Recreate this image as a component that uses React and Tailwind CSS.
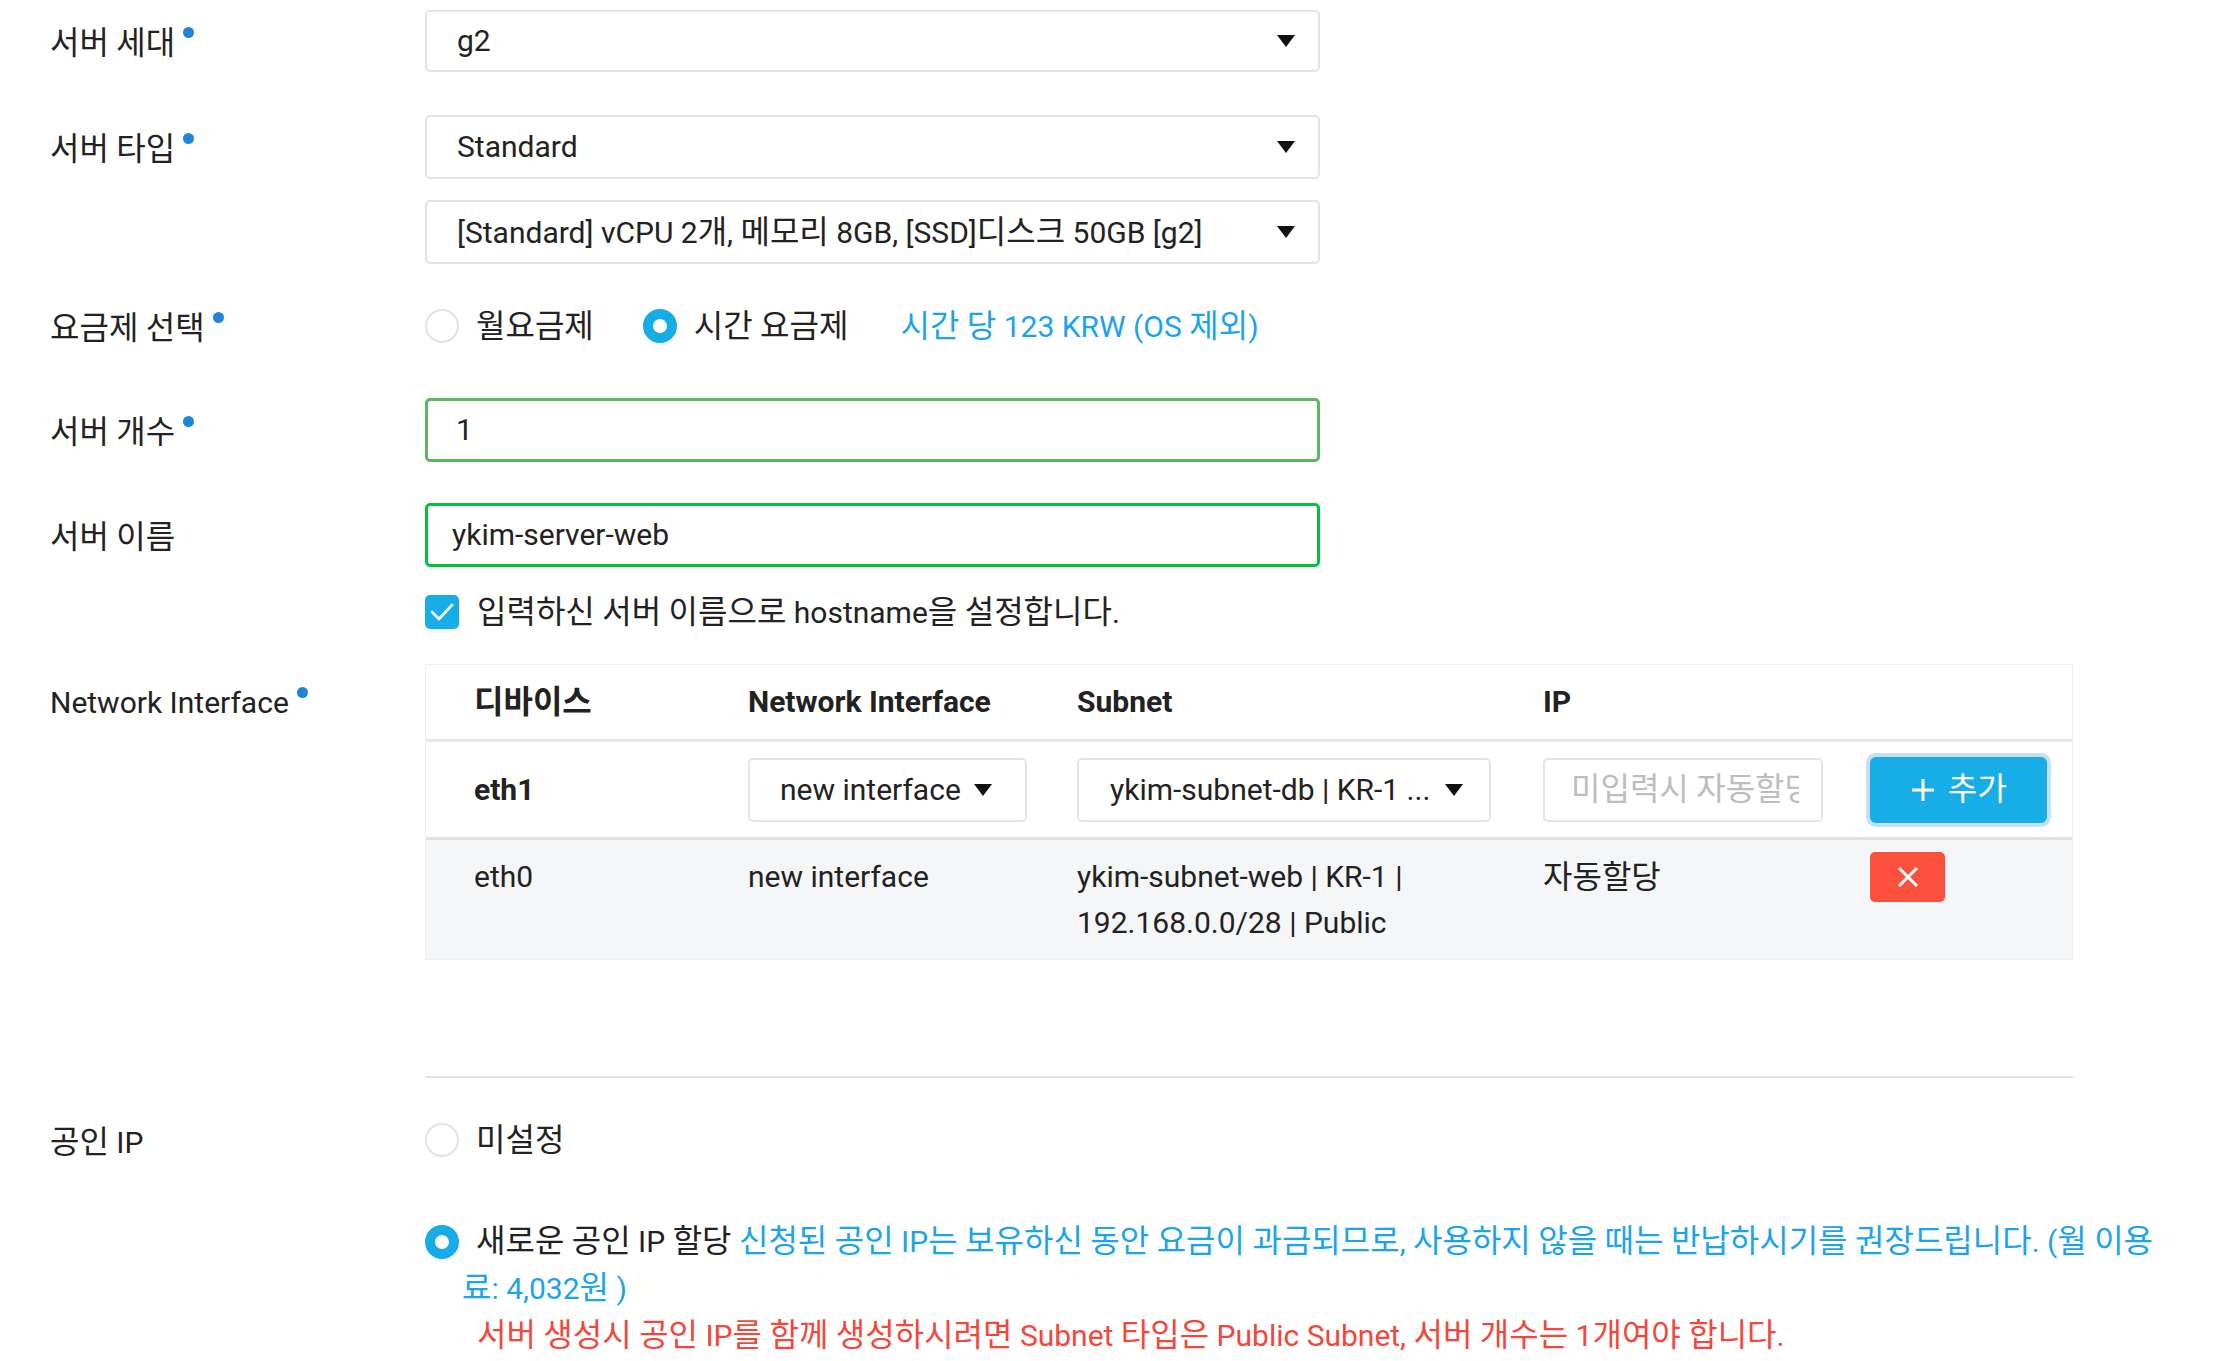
import React from "react";

const FONT = { fontFamily: 'Roboto, "Noto Sans CJK KR", "Noto Sans", sans-serif' };

function K({ children }) {
  const s = String(children);
  const parts = s.split(/([\uAC00-\uD7A3\u3131-\u318E]+)/);
  return parts.map((p, i) =>
    /[\uAC00-\uD7A3\u3131-\u318E]/.test(p) ? (
      <span key={i} className="text-[32px]">{p}</span>
    ) : (
      <React.Fragment key={i}>{p}</React.Fragment>
    )
  );
}

function Req({ children }) {
  return (
    <span className="relative inline-block">
      <K>{children}</K>
      <span className="absolute -right-[19px] top-[6px] w-[11px] h-[11px] rounded-full bg-[#1f84dc]" />
    </span>
  );
}

function Caret({ className = "" }) {
  return (
    <svg width="20" height="14" viewBox="0 0 20 14" className={className}>
      <path d="M1 1 L19 1 L10 13 Z" fill="#111" />
    </svg>
  );
}

function Select({ children, h = "h-[64px]" }) {
  return (
    <div className={"w-[895px] border-2 border-[#e4e4e4] rounded-[5px] flex items-center pl-[30px] pr-[22px] justify-between bg-white " + h}>
      <span className="text-[#222] whitespace-nowrap"><K>{children}</K></span>
      <Caret />
    </div>
  );
}

function Radio({ checked }) {
  return checked ? (
    <span className="inline-block align-middle w-[34px] h-[34px] rounded-full border-[10px] border-[#16ace8] bg-white shrink-0" />
  ) : (
    <span className="inline-block align-middle w-[34px] h-[34px] rounded-full border-2 border-[#e2e2e2] bg-white shrink-0" />
  );
}

export default function App() {
  return (
    <div style={FONT} className="bg-white w-[2213px] h-[1361px] overflow-hidden text-[#222] text-[30px] leading-[44px] pl-[50px]">
      {/* 서버 세대 */}
      <div className="flex items-center mt-[10px] h-[62px]">
        <div className="w-[375px] pt-[4px]"><Req>서버 세대</Req></div>
        <Select h="h-[62px]">g2</Select>
      </div>
      {/* 서버 타입 */}
      <div className="flex items-center mt-[43px] h-[64px]">
        <div className="w-[375px] pt-[4px]"><Req>서버 타입</Req></div>
        <Select>Standard</Select>
      </div>
      <div className="flex items-center mt-[21px] h-[64px]">
        <div className="w-[375px]" />
        <Select>[Standard] vCPU 2개, 메모리 8GB, [SSD]디스크 50GB [g2]</Select>
      </div>
      {/* 요금제 선택 */}
      <div className="flex items-center mt-[31px] h-[62px]">
        <div className="w-[375px] pt-[4px]"><Req>요금제 선택</Req></div>
        <div className="flex items-center">
          <Radio />
          <span className="ml-[17px]"><K>월요금제</K></span>
          <span className="ml-[49px] flex"><Radio checked /></span>
          <span className="ml-[17px]"><K>시간 요금제</K></span>
          <span className="ml-[52px] text-[#1ca4e8]"><K>시간 당 123 KRW (OS 제외)</K></span>
        </div>
      </div>
      {/* 서버 개수 */}
      <div className="flex items-center mt-[41px] h-[64px]">
        <div className="w-[375px] pt-[4px]"><Req>서버 개수</Req></div>
        <div className="w-[895px] h-[64px] border-[3px] border-[#5cb85c] rounded-[5px] flex items-center pl-[28px]">1</div>
      </div>
      {/* 서버 이름 */}
      <div className="flex items-center mt-[41px] h-[64px]">
        <div className="w-[375px] pt-[4px]"><K>서버 이름</K></div>
        <div className="w-[895px] h-[64px] border-[3px] border-[#00c43c] rounded-[5px] flex items-center pl-[24px]">ykim-server-web</div>
      </div>
      {/* hostname checkbox */}
      <div className="flex items-center mt-[28px] h-[34px]">
        <div className="w-[375px]" />
        <span className="w-[34px] h-[34px] rounded-[5px] bg-[#17ade8] flex items-center justify-center">
          <svg width="24" height="24" viewBox="0 0 24 24">
            <path d="M2 12 L9 19 L22 5" stroke="#fff" strokeWidth="2.6" fill="none" strokeLinecap="round" strokeLinejoin="round" />
          </svg>
        </span>
        <span className="ml-[18px] whitespace-nowrap"><K>입력하신 서버 이름으로 hostname을 설정합니다.</K></span>
      </div>
      {/* Network Interface */}
      <div className="flex items-start mt-[35px]">
        <div className="w-[375px] h-[77px] flex items-center"><Req>Network Interface</Req></div>
        <div className="w-[1648px] border border-[#efefef]">
          <div className="flex items-center h-[77px] pl-[48px] font-bold border-b-[3px] border-[#e6e6e6]">
            <div className="w-[274px]"><K>디바이스</K></div>
            <div className="w-[329px]">Network Interface</div>
            <div className="w-[466px]">Subnet</div>
            <div className="w-[327px]">IP</div>
          </div>
          <div className="flex items-center h-[98px] pl-[48px] border-b-[3px] border-[#e2e2e2]">
            <div className="w-[274px] font-bold">eth1</div>
            <div className="w-[329px]">
              <div className="w-[279px] h-[64px] border-2 border-[#e4e4e4] rounded-[5px] flex items-center pl-[30px]">
                <span className="whitespace-nowrap">new interface</span>
                <Caret className="ml-[12px]" />
              </div>
            </div>
            <div className="w-[466px]">
              <div className="w-[414px] h-[64px] border-2 border-[#e4e4e4] rounded-[5px] flex items-center pl-[31px]">
                <span className="whitespace-nowrap">ykim-subnet-db | KR-1 ...</span>
                <Caret className="ml-[14px]" />
              </div>
            </div>
            <div className="w-[327px]">
              <div className="w-[280px] h-[64px] border-2 border-[#e4e4e4] rounded-[5px] flex items-center pl-[26px] pr-[22px] overflow-hidden">
                <span className="whitespace-nowrap overflow-hidden text-[#bdbdbd]"><K>미입력시 자동할당</K></span>
              </div>
            </div>
            <div className="w-[177px] h-[66px] rounded-[6px] bg-[#17aee8] ring-4 ring-[#c6dff3] flex items-center justify-center text-white">
              <svg width="26" height="26" viewBox="0 0 26 26">
                <path d="M13 2 V24 M2 13 H24" stroke="#fff" strokeWidth="3" />
              </svg>
              <span className="ml-[12px]"><K>추가</K></span>
            </div>
          </div>
          <div className="flex items-start h-[119px] bg-[#f5f6f8] pl-[48px] pt-[14px] leading-[46px]">
            <div className="w-[274px]">eth0</div>
            <div className="w-[329px]">new interface</div>
            <div className="w-[466px]">ykim-subnet-web | KR-1 |<br />192.168.0.0/28 | Public</div>
            <div className="w-[327px]"><K>자동할당</K></div>
            <div className="w-[75px] h-[50px] rounded-[5px] bg-[#fb503c] flex items-center justify-center mt-[-2px]">
              <svg width="24" height="24" viewBox="0 0 24 24">
                <path d="M3 3 L21 21 M21 3 L3 21" stroke="#fff" strokeWidth="3" />
              </svg>
            </div>
          </div>
        </div>
      </div>
      {/* divider */}
      <div className="flex mt-[116px]">
        <div className="w-[375px]" />
        <div className="w-[1648px] h-[2px] bg-[#e3e3e3]" />
      </div>
      {/* 공인 IP */}
      <div className="flex items-center mt-[45px] h-[34px]">
        <div className="w-[375px] pt-[4px]"><K>공인 IP</K></div>
        <Radio />
        <span className="ml-[17px]"><K>미설정</K></span>
      </div>
      <div className="flex mt-[61px]">
        <div className="w-[375px]" />
        <div className="leading-[47px]">
          <div className="whitespace-nowrap h-[47px] flex items-center">
            <Radio checked />
            <span className="ml-[17px]"><K>새로운 공인 IP 할당</K>&nbsp;</span>
            <span className="text-[#1ca4e8]"><K>신청된 공인 IP는 보유하신 동안 요금이 과금되므로, 사용하지 않을 때는 반납하시기를 권장드립니다. (월 이용</K></span>
          </div>
          <div className="pl-[37px] text-[#1ca4e8] whitespace-nowrap h-[47px]"><K>료: 4,032원 )</K></div>
          <div className="pl-[52px] text-[#f2473a] whitespace-nowrap h-[47px]"><K>서버 생성시 공인 IP를 함께 생성하시려면 Subnet 타입은 Public Subnet, 서버 개수는 1개여야 합니다.</K></div>
        </div>
      </div>
    </div>
  );
}
